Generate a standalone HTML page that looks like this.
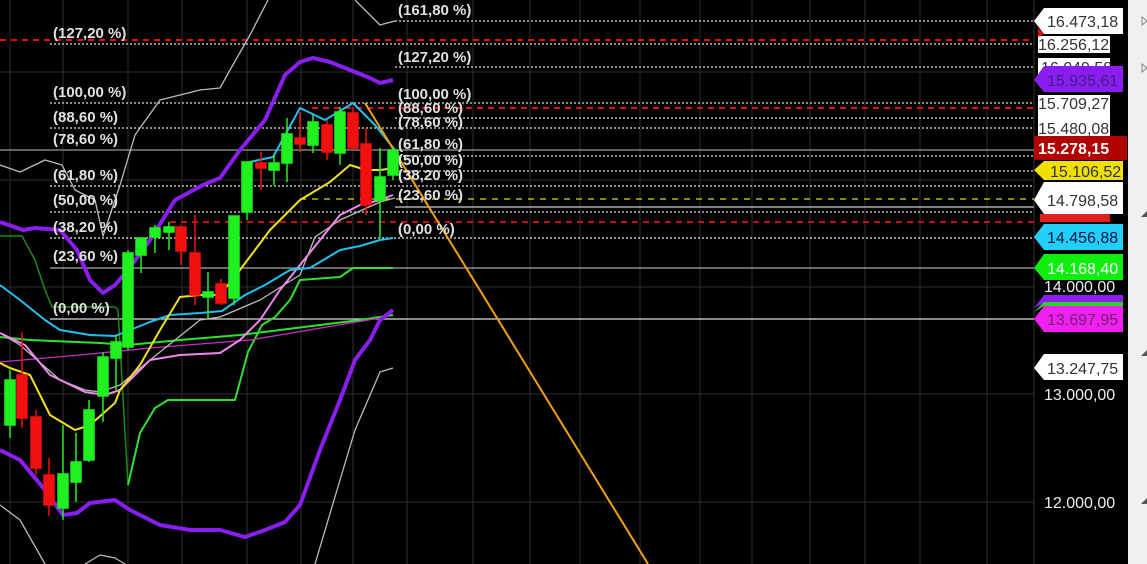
<!DOCTYPE html>
<html><head><meta charset="utf-8"><style>
html,body{margin:0;padding:0;background:#000;overflow:hidden}
svg{display:block}
text{font-family:"Liberation Sans",sans-serif}
</style></head><body>
<svg width="1147" height="564" viewBox="0 0 1147 564" xmlns="http://www.w3.org/2000/svg">
<rect width="1147" height="564" fill="#000"/>
<!-- grid -->
<g stroke="#2e2e2e" stroke-width="1">
<line x1="10" y1="0" x2="10" y2="564"/><line x1="63" y1="0" x2="63" y2="564"/><line x1="128" y1="0" x2="128" y2="564"/><line x1="182" y1="0" x2="182" y2="564"/><line x1="247" y1="0" x2="247" y2="564"/><line x1="301" y1="0" x2="301" y2="564"/><line x1="353" y1="0" x2="353" y2="564"/><line x1="407" y1="0" x2="407" y2="564"/><line x1="473" y1="0" x2="473" y2="564"/><line x1="530" y1="0" x2="530" y2="564"/><line x1="580" y1="0" x2="580" y2="564"/><line x1="640" y1="0" x2="640" y2="564"/><line x1="700" y1="0" x2="700" y2="564"/><line x1="752" y1="0" x2="752" y2="564"/><line x1="810" y1="0" x2="810" y2="564"/><line x1="865" y1="0" x2="865" y2="564"/><line x1="920" y1="0" x2="920" y2="564"/><line x1="987" y1="0" x2="987" y2="564"/>
<line x1="0" y1="72" x2="1034" y2="72"/><line x1="0" y1="180" x2="1034" y2="180"/><line x1="0" y1="287" x2="1034" y2="287"/><line x1="0" y1="394" x2="1034" y2="394"/><line x1="0" y1="502" x2="1034" y2="502"/>
</g>
<line x1="1034" y1="0" x2="1034" y2="564" stroke="#333"/>
<!-- fib lines -->
<g fill="none" stroke-width="1.3">
<line x1="395" y1="21" x2="1034" y2="21" stroke="#ddd" stroke-dasharray="2 2"/>
<line x1="0" y1="40" x2="1034" y2="40" stroke="#e01010" stroke-dasharray="6 5" stroke-width="2"/>
<line x1="50" y1="44" x2="1034" y2="44" stroke="#ddd" stroke-dasharray="2 2"/>
<line x1="395" y1="67" x2="1034" y2="67" stroke="#ddd" stroke-dasharray="2 2"/>
<line x1="50" y1="103" x2="1034" y2="103" stroke="#ddd" stroke-dasharray="2 2"/>
<line x1="312" y1="108" x2="1034" y2="108" stroke="#e01010" stroke-dasharray="6 5" stroke-width="2"/>
<line x1="395" y1="118" x2="1034" y2="118" stroke="#ddd" stroke-dasharray="2 2"/>
<line x1="50" y1="128" x2="1034" y2="128" stroke="#ddd" stroke-dasharray="2 2"/>
<line x1="0" y1="150" x2="1034" y2="150" stroke="#999"/>
<line x1="395" y1="156" x2="1034" y2="156" stroke="#ddd" stroke-dasharray="2 2"/>
<line x1="395" y1="171" x2="1034" y2="171" stroke="#ddd" stroke-dasharray="2 2"/>
<line x1="50" y1="186" x2="1034" y2="186" stroke="#ddd" stroke-dasharray="2 2"/>
<line x1="300" y1="199" x2="1034" y2="199" stroke="#e0e000" stroke-dasharray="6 6"/>
<line x1="395" y1="207" x2="1034" y2="207" stroke="#ccc"/>
<line x1="50" y1="212" x2="1034" y2="212" stroke="#ddd" stroke-dasharray="2 2"/>
<line x1="170" y1="222" x2="1034" y2="222" stroke="#c01010" stroke-dasharray="6 5" stroke-width="2"/>
<line x1="50" y1="238" x2="1034" y2="238" stroke="#eee" stroke-dasharray="2 2"/>
<line x1="50" y1="268" x2="1034" y2="268" stroke="#aaa"/>
<line x1="50" y1="319" x2="1034" y2="319" stroke="#ddd"/>
</g>
<!-- indicator lines -->
<g fill="none" stroke-linejoin="round">
<polyline stroke="#1a8a1a" stroke-width="1.5" points="0,236 22,236 35,260 45,290 52,307 115,307 118,310 128,485"/>
<polyline stroke="#30e030" stroke-width="2" points="128,485 140,433 155,408 168,400 235,400 248,352 262,325 275,317 290,300 300,280 340,277 353,268 393,268"/>
<polyline stroke="#30e030" stroke-width="2" points="0,337 30,340 100,343 128,345 180,340 240,335 280,330 320,325 360,320 393,315"/>
<polyline stroke="#c030c0" stroke-width="1.3" points="0,362 80,355 150,348 250,340 380,318"/>
<polyline stroke="#bbb" stroke-width="1.3" points="0,165 20,172 45,160 62,165 75,190 95,200 103,236 120,185 135,135 160,100 180,95 200,90 220,88 230,70 250,35 268,0"/>
<polyline stroke="#bbb" stroke-width="1.3" points="355,0 380,25 395,21"/>
<polyline stroke="#bbb" stroke-width="1.3" points="0,505 20,520 45,564"/>
<polyline stroke="#bbb" stroke-width="1.3" points="85,564 100,555 115,558 125,564"/>
<polyline stroke="#bbb" stroke-width="1.3" points="315,564 340,480 355,430 380,372 393,368"/>
<polyline stroke="#bbb" stroke-width="1.3" points="0,333 20,345 60,380 85,390 100,392 120,385 150,360 200,320 220,317 260,300 300,275 315,237 340,220 380,202 395,198"/>
<polyline stroke="#ee88ee" stroke-width="2" points="0,333 25,345 50,375 85,392 105,395 120,390 135,375 150,360 180,355 220,353 240,340 260,320 280,290 300,265 320,240 340,215 360,205 380,200 393,195"/>
<polyline stroke="#20c0f0" stroke-width="2" points="0,285 20,300 45,320 60,330 90,335 115,336 130,330 150,322 170,315 200,313 222,311 245,295 265,285 290,270 310,268 340,250 360,246 380,240 393,238"/>
<polyline stroke="#20c0f0" stroke-width="2" points="245,163 273,157 300,108 325,120 353,103 375,125 395,150"/>
<polyline stroke="#f0e020" stroke-width="2" points="0,363 10,368 30,375 50,415 75,430 90,425 115,403 120,390 140,365 160,330 180,297 200,295 220,295 240,270 270,230 300,200 330,182 350,165 366,170 380,170 395,168"/>
<polyline stroke="#8a1ef0" stroke-width="4" points="0,222 23,230 35,228 60,230 77,250 90,280 103,293 115,285 128,270 150,240 175,200 203,185 220,178 240,150 265,120 285,75 300,62 313,58 330,62 350,70 370,78 380,83 393,80"/>
<polyline stroke="#8a1ef0" stroke-width="4" points="0,450 20,460 45,490 63,515 77,513 90,503 115,500 130,510 160,525 190,530 220,530 245,537 265,530 285,522 300,505 320,450 340,400 355,360 370,340 380,320 393,310"/>
<line x1="365" y1="103" x2="648" y2="564" stroke="#f0a010" stroke-width="2"/>
</g>
<!-- candles -->
<g stroke-width="1.5">
<g stroke="#20f020" fill="#20f020">
<line x1="10" y1="370" x2="10" y2="438"/><rect x="5" y="380" width="10" height="45"/>
<line x1="63" y1="425" x2="63" y2="520"/><rect x="58" y="474" width="10" height="34"/>
<line x1="76" y1="433" x2="76" y2="502"/><rect x="71" y="462" width="10" height="20"/>
<line x1="89" y1="400" x2="89" y2="462"/><rect x="84" y="410" width="10" height="50"/>
<line x1="103" y1="352" x2="103" y2="422"/><rect x="98" y="357" width="10" height="39"/>
<line x1="116" y1="335" x2="116" y2="390"/><rect x="111" y="342" width="10" height="16"/>
<line x1="128" y1="250" x2="128" y2="350"/><rect x="123" y="253" width="10" height="94"/>
<line x1="141" y1="238" x2="141" y2="273"/><rect x="136" y="238" width="10" height="17"/>
<line x1="155" y1="225" x2="155" y2="253"/><rect x="150" y="228" width="10" height="9"/>
<line x1="169" y1="222" x2="169" y2="250"/><rect x="164" y="227" width="10" height="5"/>
<line x1="208" y1="272" x2="208" y2="318"/><rect x="203" y="292" width="10" height="5"/>
<line x1="234" y1="216" x2="234" y2="305"/><rect x="229" y="216" width="10" height="82"/>
<line x1="247" y1="162" x2="247" y2="220"/><rect x="242" y="162" width="10" height="50"/>
<line x1="274" y1="155" x2="274" y2="185"/><rect x="269" y="163" width="10" height="7"/>
<line x1="287" y1="118" x2="287" y2="182"/><rect x="282" y="134" width="10" height="29"/>
<line x1="313" y1="115" x2="313" y2="153"/><rect x="308" y="122" width="10" height="23"/>
<line x1="340" y1="107" x2="340" y2="165"/><rect x="335" y="112" width="10" height="41"/>
<line x1="380" y1="148" x2="380" y2="238"/><rect x="375" y="177" width="10" height="23"/>
<line x1="393" y1="148" x2="393" y2="180"/><rect x="388" y="150" width="10" height="25"/>
</g>
<g stroke="#f01010" fill="#f01010">
<line x1="22" y1="332" x2="22" y2="428"/><rect x="17" y="375" width="10" height="43"/>
<line x1="36" y1="410" x2="36" y2="475"/><rect x="31" y="417" width="10" height="51"/>
<line x1="49" y1="458" x2="49" y2="516"/><rect x="44" y="475" width="10" height="30"/>
<line x1="181" y1="225" x2="181" y2="265"/><rect x="176" y="227" width="10" height="24"/>
<line x1="195" y1="215" x2="195" y2="305"/><rect x="190" y="253" width="10" height="42"/>
<line x1="221" y1="279" x2="221" y2="305"/><rect x="216" y="284" width="10" height="19"/>
<line x1="261" y1="152" x2="261" y2="190"/><rect x="256" y="163" width="10" height="5"/>
<line x1="300" y1="112" x2="300" y2="152"/><rect x="295" y="138" width="10" height="6"/>
<line x1="327" y1="120" x2="327" y2="160"/><rect x="322" y="125" width="10" height="27"/>
<line x1="353" y1="107" x2="353" y2="150"/><rect x="348" y="113" width="10" height="35"/>
<line x1="366" y1="128" x2="366" y2="215"/><rect x="361" y="144" width="10" height="61"/>
</g>
</g>
<!-- fib labels -->
<g fill="#e0e0e0" font-size="15" font-weight="bold">
<text x="53" y="38">(127,20 %)</text>
<text x="53" y="97">(100,00 %)</text>
<text x="53" y="122">(88,60 %)</text>
<text x="53" y="144">(78,60 %)</text>
<text x="53" y="180">(61,80 %)</text>
<text x="53" y="205">(50,00 %)</text>
<text x="53" y="232">(38,20 %)</text>
<text x="53" y="261">(23,60 %)</text>
<text x="53" y="313">(0,00 %)</text>
<text x="398" y="15">(161,80 %)</text>
<text x="398" y="62">(127,20 %)</text>
<text x="398" y="99">(100,00 %)</text>
<text x="398" y="113">(88,60 %)</text>
<text x="398" y="127">(78,60 %)</text>
<text x="398" y="149">(61,80 %)</text>
<text x="398" y="165">(50,00 %)</text>
<text x="398" y="180">(38,20 %)</text>
<text x="398" y="200">(23,60 %)</text>
<text x="398" y="234">(0,00 %)</text>
</g>
<!-- price tags -->
<g font-size="16">
<path d="M1034,21 L1044,8 H1123 V34 H1044 Z" fill="#fff"/><text x="1047" y="27" fill="#333">16.473,18</text>
<path d="M1038,58 H1110 V78 H1038 Z" fill="#fff"/><text x="1041" y="73" fill="#333">16.049,58</text>
<path d="M1038,36 H1110 V53 H1038 Z" fill="#fff"/><path d="M1038,28 L1044,34 L1038,37Z" fill="#e01010"/><text x="1038" y="50" fill="#333">16.256,12</text>
<path d="M1034,80 L1044,66 H1123 V92 H1044 Z" fill="#8a1ef0"/><text x="1047" y="86" fill="#402080">15.935,61</text>
<path d="M1038,95 H1110 V137 H1038 Z" fill="#fff"/>
<text x="1038" y="109" fill="#333">15.709,27</text><text x="1038" y="134" fill="#333">15.480,08</text>
<path d="M1034,136 H1127 V160 H1034 Z" fill="#b00000"/><text x="1038" y="154" fill="#fff" font-weight="bold">15.278,15</text>
<path d="M1034,170 L1044,161 H1123 V180 H1044 Z" fill="#f0e000"/><text x="1050" y="177" fill="#333">15.106,52</text>
<path d="M1034,200 L1044,182 H1123 V214 H1044 Z" fill="#fff"/><text x="1047" y="206" fill="#333">14.798,58</text>
<path d="M1040,214 H1110 V222 H1040 Z" fill="#e02020"/>
<path d="M1034,237 L1044,224 H1123 V250 H1044 Z" fill="#20d0f8"/><text x="1047" y="243" fill="#114">14.456,88</text>
<path d="M1034,268 L1044,254 H1123 V280 H1044 Z" fill="#10ee10"/><text x="1047" y="274" fill="#fff">14.168,40</text>
<text x="1044" y="292" fill="#eee">14.000,00</text>
<path d="M1034,308 L1044,295 H1123 V303 H1044 Z" fill="#8a1ef0"/>
<path d="M1034,312 L1044,302 H1123 V306 H1044 Z" fill="#30d030"/>
<path d="M1034,319 L1044,306 H1123 V332 H1044 Z" fill="#f020f0"/><text x="1047" y="325" fill="#702070">13.697,95</text>
<path d="M1034,368 L1044,354 H1123 V380 H1044 Z" fill="#fff"/><text x="1047" y="374" fill="#333">13.247,75</text>
<text x="1044" y="400" fill="#eee">13.000,00</text>
<text x="1044" y="508" fill="#eee">12.000,00</text>
</g>
<!-- right panel -->
<rect x="1128" y="0" width="19" height="564" fill="#f0f0f0"/>
<g fill="none" stroke="#888"><path d="M1142,17 L1147,21 L1142,25 Z"/><path d="M1142,64 L1147,68 L1142,72 Z"/></g>
<path d="M1141,217 L1147,211 L1147,217Z" fill="#555"/>
<path d="M1141,356 L1147,350 L1147,356Z" fill="#555"/>
<path d="M1141,504 L1147,498 L1147,504Z" fill="#555"/>
</svg>
</body></html>
